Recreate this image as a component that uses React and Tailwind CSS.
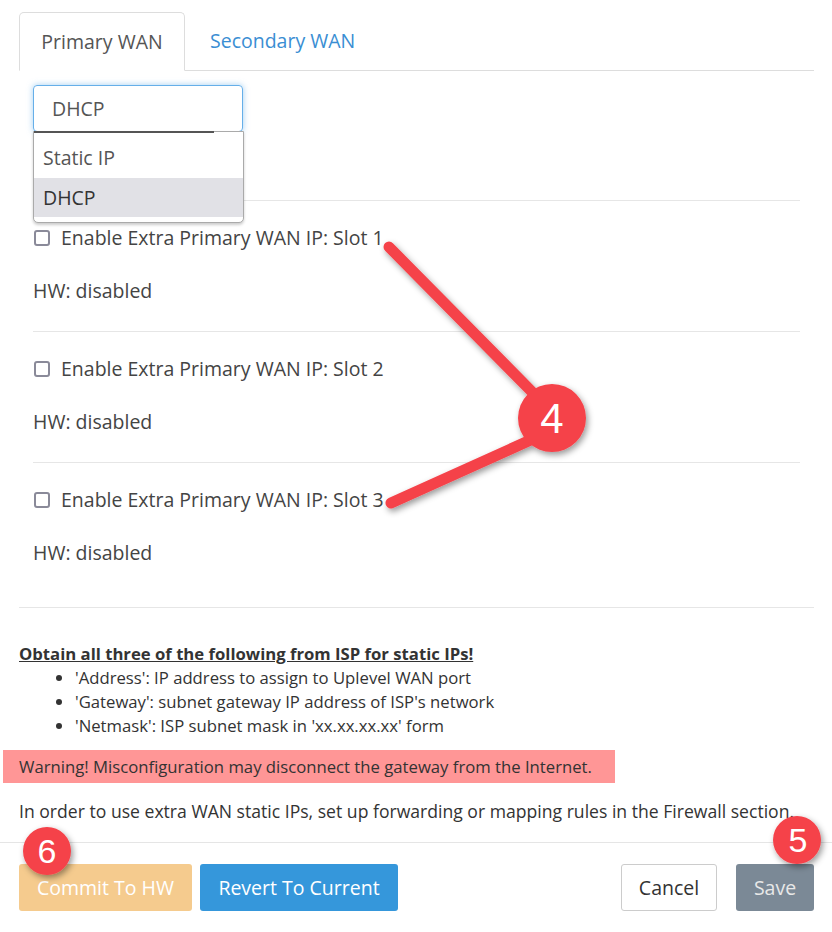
import React from "react";

function Slot({ n, last }) {
  return (
    <div className={"border-t border-[#e6e6e6] " + (last ? "h-[145px]" : "h-[131px]")}>
      <label className="flex items-center h-[20px] mt-[27px]">
        <span className="w-[16px] h-[16px] ml-[1px] border-2 border-[#8a8a99] rounded-[3px] bg-white"></span>
        <span className="ml-[11px] text-[19.5px] text-[#444]">Enable Extra Primary WAN IP: Slot {n}</span>
      </label>
      <div className="mt-[33px] text-[19.5px] text-[#444] leading-[20px]">HW: disabled</div>
    </div>
  );
}

export default function App() {
  return (
    <div className="relative w-[832px] h-[932px] bg-white overflow-hidden" style={{ fontFamily: '"Open Sans", "Liberation Sans", sans-serif' }}>
      <div className="px-[19px] pt-[12px] pr-[18px]">
        {/* tabs */}
        <div className="flex border-b border-[#dddddd] h-[59px]">
          <div className="w-[166px] h-[59px] border border-[#dddddd] border-b-white rounded-t-[5px] bg-white flex items-center justify-center text-[19.5px] text-[#555]">
            Primary WAN
          </div>
          <div className="ml-[25px] flex items-center text-[19.5px] text-[#3a8ed3]">Secondary WAN</div>
        </div>

        <div className="px-[14px]">
          {/* select */}
          <div className="relative mt-[14px] w-[210px] h-[47px] border border-[#66afe9] rounded-[4px] shadow-[0_0_6px_rgba(102,175,233,0.6)] flex items-center pl-[18px] text-[19.5px] text-[#555]">
            DHCP
            <div className="absolute left-[-1px] top-[45px] w-[211px] h-[92px] bg-white border border-[#aaa] rounded-b-[5px] shadow-[0_2px_3px_rgba(0,0,0,0.2)] z-10">
              <div className="absolute left-0 top-[-1px] w-[180px] h-[2px] bg-[#555]"></div>
              <div className="h-[46px] flex items-center pl-[9px] pt-[6px] text-[19.5px] text-[#555]">Static IP</div>
              <div className="h-[39px] flex items-center pl-[9px] bg-[#e1e1e6] text-[19.5px] text-[#333]">DHCP</div>
            </div>
          </div>

          <div className="mt-[68px]">
            <Slot n={1} />
            <Slot n={2} />
            <Slot n={3} last />
          </div>
        </div>

        <div className="border-t border-[#e6e6e6] pt-[34px] text-[16.7px] text-[#333]">
          <div className="font-bold underline leading-[24px]">Obtain all three of the following from ISP for static IPs!</div>
          <ul className="list-disc pl-[56px] leading-[24px]">
            <li>'Address': IP address to assign to Uplevel WAN port</li>
            <li>'Gateway': subnet gateway IP address of ISP's network</li>
            <li>'Netmask': ISP subnet mask in 'xx.xx.xx.xx' form</li>
          </ul>
          <div className="mt-[12px] ml-[-16px] w-[612px] h-[33px] bg-[#ff9696] pl-[16px] flex items-center text-[#333]">
            Warning! Misconfiguration may disconnect the gateway from the Internet.
          </div>
          <div className="mt-[17px] leading-[22px] text-[17.6px]">
            In order to use extra WAN static IPs, set up forwarding or mapping rules in the Firewall section.
          </div>
        </div>
      </div>

      {/* footer */}
      <div className="mt-[20px] border-t border-[#e5e5e5] px-[19px] pr-[18px] pt-[21px] flex items-center">
        <button className="w-[173px] h-[47px] rounded-[3px] bg-[#f5cb8e] text-white text-[19.5px]">Commit To HW</button>
        <button className="ml-[8px] w-[198px] h-[47px] rounded-[3px] bg-[#3597db] text-white text-[19.5px]">Revert To Current</button>
        <div className="flex-1"></div>
        <button className="w-[96px] h-[47px] rounded-[3px] bg-white border border-[#cccccc] text-[#333] text-[19.5px]">Cancel</button>
        <button className="ml-[19px] w-[78px] h-[47px] rounded-[3px] bg-[#7b8996] text-[#e8e8e8] text-[19.5px]">Save</button>
      </div>

      {/* annotations */}
      <svg className="absolute left-0 top-0 pointer-events-none z-20" width="832" height="932">
        <defs>
          <filter id="sh" x="-50%" y="-50%" width="200%" height="200%">
            <feDropShadow dx="2" dy="3" stdDeviation="3" floodColor="#000" floodOpacity="0.4" />
          </filter>
        </defs>
        <g filter="url(#sh)">
          <line x1="389" y1="247" x2="545" y2="405" stroke="#f5424a" strokeWidth="11" strokeLinecap="round" />
          <line x1="391" y1="503" x2="535" y2="438" stroke="#f5424a" strokeWidth="11" strokeLinecap="round" />
          <circle cx="552" cy="418" r="34" fill="#f5424a" />
          <circle cx="47" cy="851" r="24" fill="#f5424a" />
          <circle cx="797" cy="840" r="24" fill="#f5424a" />
        </g>
        <text x="47" y="863" textAnchor="middle" fill="#fff" fontSize="34" fontFamily="Liberation Sans, Arial, sans-serif">6</text>
        <text x="552" y="433" textAnchor="middle" fill="#fff" fontSize="42" fontFamily="Liberation Sans, Arial, sans-serif">4</text>
        <text x="798" y="852" textAnchor="middle" fill="#fff" fontSize="34" fontFamily="Liberation Sans, Arial, sans-serif">5</text>
      </svg>
    </div>
  );
}
